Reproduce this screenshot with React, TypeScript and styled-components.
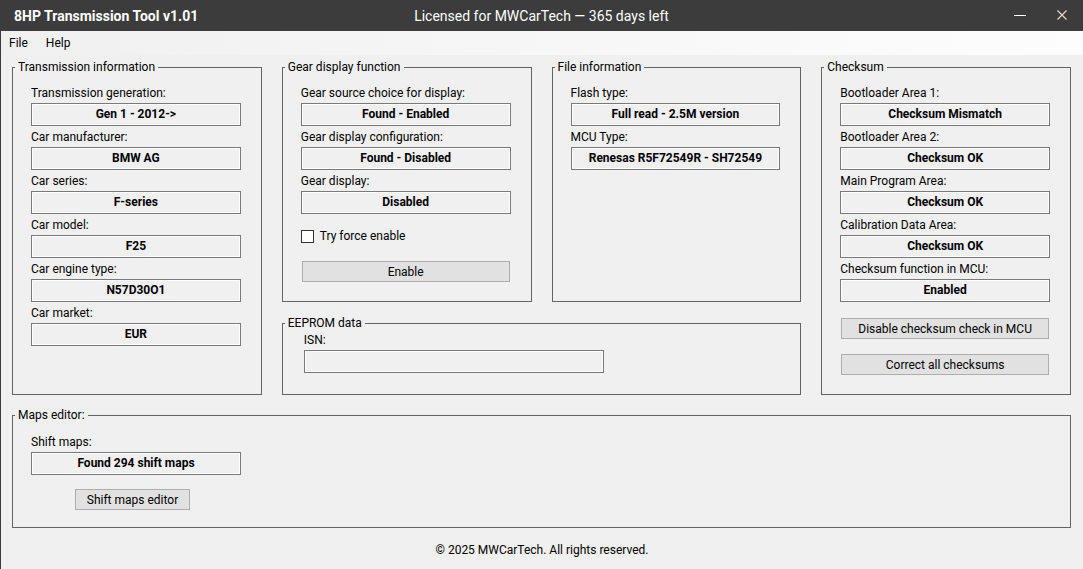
import React, { useId, useState } from "react";
import styled, { createGlobalStyle } from "styled-components";

const GlobalStyle = createGlobalStyle`
  * { box-sizing: border-box; }
  body {
    margin: 0;
    background: #f0f0f0;
    color: #000;
    font-family: Roboto, "Open Sans", sans-serif;
    font-size: 12px;
  }
  button, input { font: inherit; color: inherit; }
`;

const Window = styled.div`
  min-height: 100vh;
  border-left: 1px solid #3c3c3c;
  background: #f0f0f0;
`;

const TitleBar = styled.header`
  display: grid;
  grid-template-columns: 1fr auto 1fr;
  align-items: center;
  height: 31px;
  margin-left: -1px;
  background: #3c3c3c;
  color: #fff;
  font-size: 14px;
`;

const Title = styled.h1`
  margin: 0;
  padding-left: 14px;
  font-size: 14px;
  font-weight: 700;
`;

const WindowControls = styled.div`
  display: flex;
  justify-content: flex-end;
`;

const WindowButton = styled.button`
  display: flex;
  align-items: center;
  justify-content: center;
  width: 42px;
  height: 30px;
  padding: 0;
  border: 0;
  background: none;
  color: #fff;
`;

const MenuBar = styled.nav`
  display: flex;
  gap: 2px;
  height: 24px;
  background: linear-gradient(to right, #f0f0f0, #fdfdfd);
`;

const MenuItem = styled.button`
  padding: 0 8px;
  border: 0;
  background: none;
  line-height: 24px;
`;

const Main = styled.main`
  display: grid;
  gap: 12px;
  padding: 4px 12px 0 11px;
`;

const Panels = styled.div`
  display: grid;
  grid-template-columns: repeat(4, minmax(0, 1fr));
  column-gap: 20px;
  row-gap: 13px;
`;

const Group = styled.fieldset<{ $rows?: number; $inset?: number }>`
  grid-row: span ${(p) => p.$rows ?? 1};
  min-width: 0;
  margin: 0;
  padding: 6px 20px 19px ${(p) => p.$inset ?? 18}px;
  border: 1px solid #646464;
`;

const EepromGroup = styled(Group)`
  grid-column: 2 / span 2;
  grid-row: 2;
  padding-top: 0;
  padding-bottom: 21px;
`;

const MapsGroup = styled(Group)`
  padding-top: 7px;
  padding-bottom: 17px;
`;

const Legend = styled.legend<{ $inset?: number }>`
  margin-left: ${(p) => 2 - (p.$inset ?? 18)}px;
  padding: 0 3px;
  line-height: 17px;
`;

const FieldRow = styled.div<{ $width?: number }>`
  display: flex;
  flex-direction: column;
  max-width: ${(p) => (p.$width ? `${p.$width}px` : "none")};
`;

const FieldLabel = styled.label<{ $compact?: boolean }>`
  padding: ${(p) => (p.$compact ? "0 0 2px" : "3px 0 2px")};
  line-height: 16px;
  white-space: nowrap;
`;

const FieldValue = styled.input`
  width: 100%;
  height: 23px;
  padding: 0 2px 1px;
  border: 1px solid #7a7a7a;
  border-radius: 0;
  background: #f0f0f0;
  box-shadow: inset 0 0 0 1px #fff;
  font-weight: 700;
  text-align: center;
  outline: 0;
`;

const CheckRow = styled.label`
  display: flex;
  align-items: center;
  gap: 6px;
  height: 16px;
  margin: 14px 0 17px;
`;

const CheckBox = styled.input`
  appearance: none;
  width: 13px;
  height: 13px;
  margin: 0;
  border: 1px solid #333;
  background: #fff;
  &:checked { box-shadow: inset 0 0 0 2px #fff; background: #333; }
`;

const Actions = styled.div`
  display: grid;
  gap: 15px;
  padding: 16px 1px 0;
`;

const Button = styled.button`
  height: 21px;
  padding: 1px 0 0;
  border: 1px solid #adadad;
  border-radius: 0;
  background: #e1e1e1;
  line-height: 18px;
  white-space: nowrap;
`;

const EnableButton = styled(Button)`
  display: block;
  width: calc(100% - 2px);
  margin: 0 1px;
`;

const EditorButton = styled(Button)`
  width: 115px;
  margin: 14px 0 0 44px;
`;

const Footer = styled.footer`
  padding: 14px 0 11px;
  line-height: 16px;
  text-align: center;
`;

function Field({ label, value, width, compact }: { label: string; value: string; width?: number; compact?: boolean }) {
  const id = useId();
  return (
    <FieldRow $width={width}>
      <FieldLabel htmlFor={id} $compact={compact}>{label}</FieldLabel>
      <FieldValue id={id} value={value} readOnly />
    </FieldRow>
  );
}

export default function App() {
  const [force, setForce] = useState(false);
  return (
    <Window>
      <GlobalStyle />
      <TitleBar>
        <Title>8HP Transmission Tool v1.01</Title>
        <span>Licensed for MWCarTech — 365 days left</span>
        <WindowControls>
          <WindowButton aria-label="Minimize">
            <svg width="12" height="12" viewBox="0 0 12 12" shapeRendering="crispEdges">
              <path d="M0 5.5H12" stroke="currentColor" />
            </svg>
          </WindowButton>
          <WindowButton aria-label="Close">
            <svg width="10" height="12" viewBox="0 0 10 12">
              <path d="M0.5 0.5L9.5 9.5M9.5 0.5L0.5 9.5" stroke="#e2d8ca" strokeWidth="1.2" />
            </svg>
          </WindowButton>
        </WindowControls>
      </TitleBar>
      <MenuBar>
        <MenuItem>File</MenuItem>
        <MenuItem>Help</MenuItem>
      </MenuBar>
      <Main>
        <Panels>
          <Group $rows={2}>
            <Legend>Transmission information</Legend>
            <Field label="Transmission generation:" value="Gen 1 - 2012->" />
            <Field label="Car manufacturer:" value="BMW AG" />
            <Field label="Car series:" value="F-series" />
            <Field label="Car model:" value="F25" />
            <Field label="Car engine type:" value="N57D30O1" />
            <Field label="Car market:" value="EUR" />
          </Group>
          <Group>
            <Legend>Gear display function</Legend>
            <Field label="Gear source choice for display:" value="Found - Enabled" />
            <Field label="Gear display configuration:" value="Found - Disabled" />
            <Field label="Gear display:" value="Disabled" />
            <CheckRow>
              <CheckBox type="checkbox" checked={force} onChange={(e) => setForce(e.target.checked)} />
              Try force enable
            </CheckRow>
            <EnableButton>Enable</EnableButton>
          </Group>
          <Group>
            <Legend>File information</Legend>
            <Field label="Flash type:" value="Full read - 2.5M version" />
            <Field label="MCU Type:" value="Renesas R5F72549R - SH72549" />
          </Group>
          <Group $rows={2}>
            <Legend>Checksum</Legend>
            <Field label="Bootloader Area 1:" value="Checksum Mismatch" />
            <Field label="Bootloader Area 2:" value="Checksum OK" />
            <Field label="Main Program Area:" value="Checksum OK" />
            <Field label="Calibration Data Area:" value="Checksum OK" />
            <Field label="Checksum function in MCU:" value="Enabled" />
            <Actions>
              <Button>Disable checksum check in MCU</Button>
              <Button>Correct all checksums</Button>
            </Actions>
          </Group>
          <EepromGroup $inset={21}>
            <Legend $inset={21}>EEPROM data</Legend>
            <Field label="ISN:" value="" width={300} compact />
          </EepromGroup>
        </Panels>
        <MapsGroup>
          <Legend>Maps editor:</Legend>
          <Field label="Shift maps:" value="Found 294 shift maps" width={210} />
          <EditorButton>Shift maps editor</EditorButton>
        </MapsGroup>
      </Main>
      <Footer>© 2025 MWCarTech. All rights reserved.</Footer>
    </Window>
  );
}
